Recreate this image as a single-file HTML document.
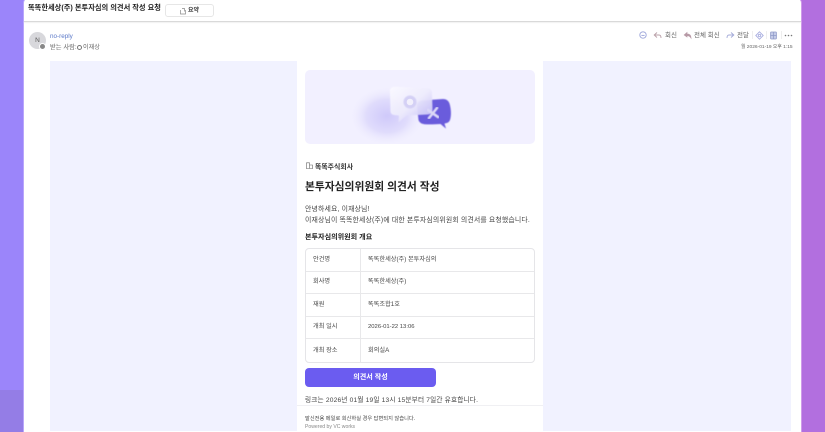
<!DOCTYPE html>
<html lang="ko"><head><meta charset="utf-8"><style>
*{box-sizing:border-box}
html,body{margin:0;padding:0}
body{width:825px;height:432px;overflow:hidden;position:relative;background:#9b85fa;font-family:"Liberation Sans","Noto Sans CJK KR",sans-serif;color:#222}
.a{position:absolute;white-space:nowrap;line-height:1;filter:blur(.25px)}
#lowl{position:absolute;left:0;top:390px;width:24px;height:42px;background:#947de6}
#lowr{position:absolute;left:801px;top:0;width:24px;height:432px;background:#b26fdf}
#panel{position:absolute;left:24px;top:-2px;width:777px;height:434px;background:#fff;border-radius:5px 5px 0 0;box-shadow:-1px 0 0 #b9a6fb,1px 0 0 #cf9bea}
#hline{position:absolute;left:24px;top:21px;width:777px;height:1px;background:#d9d9d9;box-shadow:0 1px 1px #eee}
#frame{position:absolute;left:50px;top:61px;width:741px;height:370px;background:#f1f2ff}
#mid{position:absolute;left:297px;top:61px;width:246px;height:371px;background:#fff}
#hero{position:absolute;left:305px;top:70px;width:230px;height:74px;background:#f2f0ff;border-radius:5px;overflow:hidden}
table{position:absolute;left:305px;top:248px;width:230px;height:113px;border-collapse:separate;border-spacing:0;border:1px solid #e5e5e8;border-radius:4px;font-size:6.2px;color:#444;filter:blur(.25px)}
td{padding:0 0 0 7px;border-bottom:1px solid #e8e8ea;height:22.6px;line-height:1}
tr:last-child td{border-bottom:none}
td:first-child{width:55px;border-right:1px solid #e8e8ea}
#btn{position:absolute;left:305px;top:368px;width:131px;height:19px;background:#6b5cf0;border-radius:4px;color:#fff;font-size:7.1px;font-weight:bold;text-align:center;line-height:18px}
</style></head><body>
<div id="lowr"></div>
<div id="lowl"></div>
<div id="panel"></div>
<div id="hline"></div>

<div class="a" style="left:28px;top:3.500px;font-size:7.250px;font-weight:bold;color:#222">똑똑한세상(주) 본투자심의 의견서 작성 요청</div>
<div class="a" style="left:165px;top:4px;width:49px;height:13px;border:1px solid #e6e6e6;border-radius:3px;background:#fff"></div>
<svg class="a" style="left:179px;top:7px" width="8" height="8" viewBox="0 0 8 8" fill="none" stroke="#888" stroke-width=".7"><path d="M1.500 3v4h5V3M3 1.500h2.500v3"/></svg>
<div class="a" style="left:188px;top:7.500px;font-size:6px;font-weight:bold;color:#333">요약</div>

<div class="a" style="left:29px;top:32px;width:17px;height:17px;border-radius:50%;background:#d8d8dc;color:#555;font-size:6.500px;text-align:center;line-height:17px">N</div>
<div class="a" style="left:39px;top:43px;width:7px;height:7px;border-radius:50%;background:#888;border:1px solid #fff"></div>
<div class="a" style="left:50px;top:33.500px;font-size:6.300px;color:#5a78c8">no-reply</div>
<div class="a" style="left:50px;top:45px;font-size:6.300px;color:#666">받는 사람:</div>
<div class="a" style="left:77px;top:45px;width:5px;height:5px;border-radius:50%;border:1px solid #777"></div>
<div class="a" style="left:83px;top:45px;font-size:6.100px;color:#666">이재상</div>

<svg class="a" style="left:638px;top:30px" width="10" height="10" viewBox="0 0 10 10" fill="none" stroke="#9aa3d8" stroke-width=".9"><circle cx="5" cy="5" r="3.200"/><path d="M3.400 5.400h3.200"/></svg>
<svg class="a" style="left:653px;top:31px" width="9" height="9" viewBox="0 0 9 9" fill="none" stroke="#b9a0a8" stroke-width=".9"><path d="M4 1.500 1.200 4 4 6.500M1.200 4H6c1.300 0 2 1 2 3"/></svg>
<div class="a" style="left:665px;top:33px;font-size:6.500px;color:#666">회신</div>
<svg class="a" style="left:683px;top:31px" width="9" height="9" viewBox="0 0 9 9" fill="#b79aa6" stroke="#b79aa6" stroke-width=".7"><path d="M4 1.500 1.200 4 4 6V4.600c2 0 3 .6 4 2.400 0-2.600-1.500-4-4-4z"/></svg>
<div class="a" style="left:694px;top:33px;font-size:6.500px;color:#666">전체 회신</div>
<svg class="a" style="left:726px;top:31px" width="9" height="9" viewBox="0 0 9 9" fill="none" stroke="#a3aad8" stroke-width=".9"><path d="M5 1.500 7.800 4 5 6.500M7.800 4H3C1.700 4 1 5 1 7"/></svg>
<div class="a" style="left:737px;top:33px;font-size:6.500px;color:#666">전달</div>
<div class="a" style="left:752px;top:31px;width:1px;height:8px;background:#eee"></div>
<svg class="a" style="left:755px;top:31px" width="9" height="9" viewBox="0 0 9 9" fill="none" stroke="#a9aee0" stroke-width=".9"><path d="M4.500.8 8.200 4.500 4.500 8.200.8 4.500z"/><circle cx="4.500" cy="4.500" r="1.200"/></svg>
<div class="a" style="left:766px;top:31px;width:1px;height:8px;background:#eee"></div>
<svg class="a" style="left:769px;top:31px" width="9" height="9" viewBox="0 0 9 9" fill="#c4cbe8" stroke="#8f9bc8" stroke-width=".7"><rect x="1.500" y="1" width="6" height="7" rx=".7"/><path d="M4.500 1v7M1.500 4.500h6"/></svg>
<div class="a" style="left:781px;top:31px;width:1px;height:8px;background:#eee"></div>
<svg class="a" style="left:784px;top:33px" width="9" height="5" viewBox="0 0 9 5" fill="#777"><circle cx="1.500" cy="2.500" r=".8"/><circle cx="4.500" cy="2.500" r=".8"/><circle cx="7.500" cy="2.500" r=".8"/></svg>
<div class="a" style="left:741px;top:45.500px;font-size:4.850px;color:#666">월 2026-01-19 오후 1:15</div>

<div id="frame"></div>
<div id="mid"></div>

<div id="hero">
<svg width="230" height="74" viewBox="0 0 230 74" style="display:block">
<defs>
<radialGradient id="g" cx=".5" cy=".5" r=".5"><stop offset="0" stop-color="#cfc9fa"/><stop offset=".55" stop-color="#e0dcfc"/><stop offset="1" stop-color="#f2f0ff" stop-opacity="0"/></radialGradient>
<linearGradient id="w" x1="0" y1="0" x2="1" y2="1"><stop offset="0" stop-color="#fbfaff"/><stop offset=".5" stop-color="#eeecfd"/><stop offset="1" stop-color="#c2bbf6"/></linearGradient>
<filter id="b"><feGaussianBlur stdDeviation=".6"/></filter>
</defs>
<ellipse cx="82" cy="46" rx="38" ry="30" fill="url(#g)"/>
<path d="M112 36c0-3 2-5 5-5.500l21-1.500c3 0 5.500 1.500 6.500 4.500 1.500 5 2 11 .8 15.500-.8 3-2.500 4-4.800 4.300l-1 .3 1.500 5-5.500-4.600c-5 .3-11 .6-16 .2-3-.3-5-1.500-6-4.200z" fill="#6a5cdc" filter="url(#b)"/>
<path d="M85 21c0-2.500 1.500-4 4-4l33 1c3 0 5 2 5 5l.5 16c0 3.500-2 5.500-5 5.500l-21 1-8 7 .5-7-5-.5c-2.500-.5-3.500-2-3.500-4z" fill="url(#w)" opacity=".95" filter="url(#b)"/>
<circle cx="105" cy="32" r="6.500" fill="#d4d0f5" filter="url(#b)"/><circle cx="105" cy="32" r="3.300" fill="#f2f0fc"/>
<path d="M124 48l8-10M123 40l10 7" stroke="#dcd8f7" stroke-width="2.600" stroke-linecap="round" filter="url(#b)"/>
</svg>
</div>

<svg class="a" style="left:306px;top:162px" width="7" height="7" viewBox="0 0 7 7" fill="none" stroke="#666" stroke-width=".6"><path d="M.5 6.500V.8h3v5.700M3.500 3h3v3.500M0 6.500h7"/></svg>
<div class="a" style="left:315px;top:165px;font-size:6.900px;font-weight:bold;color:#333">똑똑주식회사</div>
<div class="a" style="left:305px;top:182px;font-size:10.750px;font-weight:bold;color:#222">본투자심의위원회 의견서 작성</div>
<div class="a" style="left:305px;top:206.500px;font-size:6.900px;color:#444;letter-spacing:.15px">안녕하세요, 이재상님!</div>
<div class="a" style="left:305px;top:217.500px;font-size:6.900px;color:#444;letter-spacing:.15px">이재상님이 똑똑한세상(주)에 대한 본투자심의위원회 의견서를 요청했습니다.</div>
<div class="a" style="left:305px;top:234px;font-size:7.100px;font-weight:bold;color:#222">본투자심의위원회 개요</div>

<table>
<tr><td>안건명</td><td>똑똑한세상(주) 본투자심의</td></tr>
<tr><td>회사명</td><td>똑똑한세상(주)</td></tr>
<tr><td>재원</td><td>똑똑조합1호</td></tr>
<tr><td>개최 일시</td><td style="font-size:5.900px">2026-01-22 13:06</td></tr>
<tr><td>개최 장소</td><td>회의실A</td></tr>
</table>

<div id="btn">의견서 작성</div>
<div class="a" style="left:305px;top:397.500px;font-size:6.650px;color:#444;letter-spacing:.17px">링크는 2026년 01월 19일 13시 15분부터 7일간 유효합니다.</div>
<div class="a" style="left:297px;top:405px;width:246px;height:1px;background:#f0f0f3"></div>
<div class="a" style="left:305px;top:416.500px;font-size:5.250px;color:#444">발신전용 메일로 회신하실 경우 답변되지 않습니다.</div>
<div class="a" style="left:305px;top:425px;font-size:5.100px;color:#888">Powered by VC works</div>
</body></html>
